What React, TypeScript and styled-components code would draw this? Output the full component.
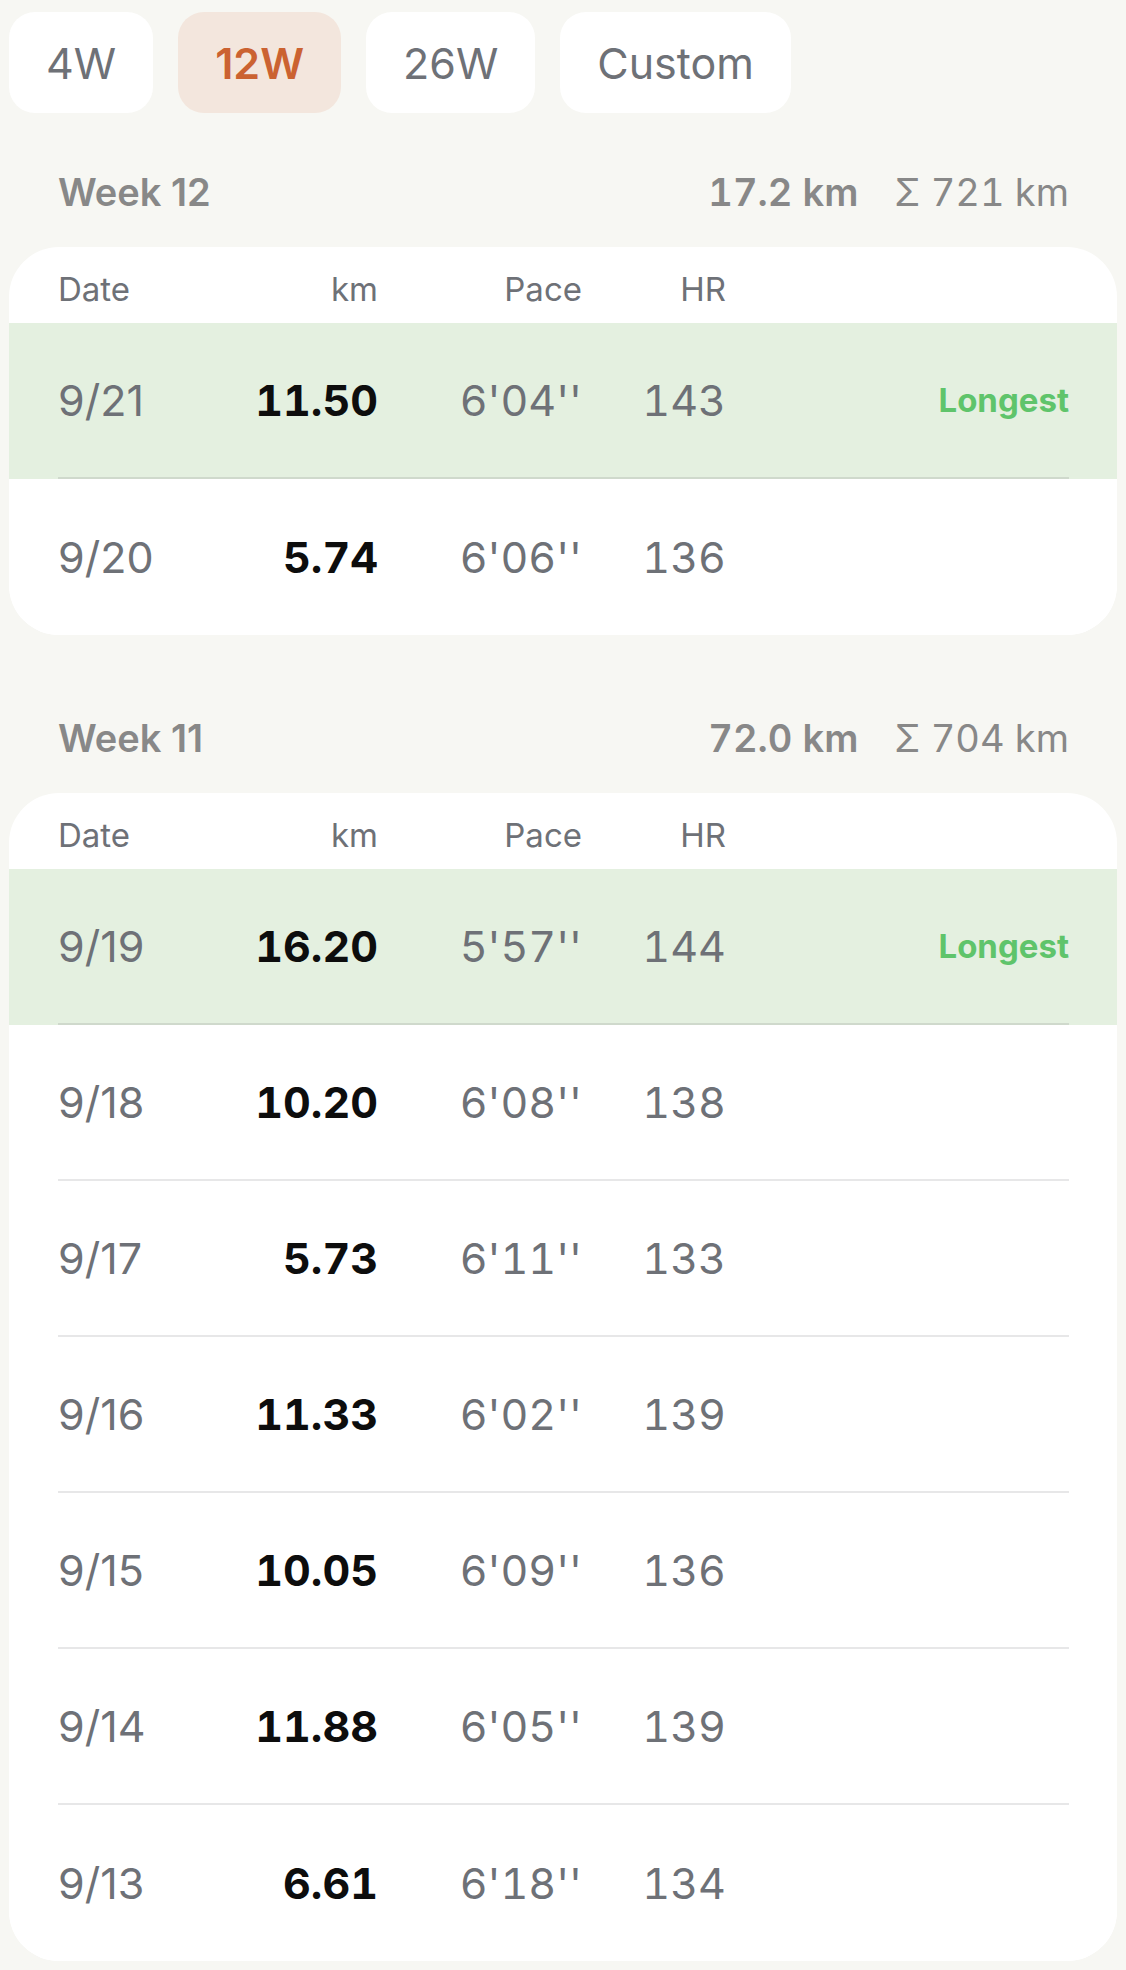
import React from "react";
import styled, { createGlobalStyle } from "styled-components";

const GlobalStyle = createGlobalStyle`
  html, body {
    margin: 0;
    padding: 0;
    background: #f7f7f3;
  }
  body {
    font-family: Inter, "Liberation Sans", Arial, sans-serif;
    font-variant-numeric: tabular-nums;
    -webkit-font-smoothing: antialiased;
  }
`;

interface Run {
  date: string;
  km: string;
  pace: string;
  hr: number;
  longest?: boolean;
}

interface Week {
  label: string;
  total: string;
  cumulative: string;
  runs: Run[];
}

const RANGES = ["4W", "12W", "26W", "Custom"];

const WEEKS: Week[] = [
  {
    label: "Week 12",
    total: "17.2 km",
    cumulative: "Σ 721 km",
    runs: [
      { date: "9/21", km: "11.50", pace: "6'04''", hr: 143, longest: true },
      { date: "9/20", km: "5.74", pace: "6'06''", hr: 136 },
    ],
  },
  {
    label: "Week 11",
    total: "72.0 km",
    cumulative: "Σ 704 km",
    runs: [
      { date: "9/19", km: "16.20", pace: "5'57''", hr: 144, longest: true },
      { date: "9/18", km: "10.20", pace: "6'08''", hr: 138 },
      { date: "9/17", km: "5.73", pace: "6'11''", hr: 133 },
      { date: "9/16", km: "11.33", pace: "6'02''", hr: 139 },
      { date: "9/15", km: "10.05", pace: "6'09''", hr: 136 },
      { date: "9/14", km: "11.88", pace: "6'05''", hr: 139 },
      { date: "9/13", km: "6.61", pace: "6'18''", hr: 134 },
    ],
  },
];

const Page = styled.div`
  padding: 12px 9px 10px;
  display: flex;
  flex-direction: column;
`;

const RangeBar = styled.div`
  display: flex;
  gap: 25px;
`;

const RangeButton = styled.button<{ $active?: boolean }>`
  height: 101px;
  padding: 0 37px;
  border: none;
  border-radius: 26px;
  font-family: inherit;
  font-size: 43px;
  font-weight: ${(p) => (p.$active ? 600 : 400)};
  color: ${(p) => (p.$active ? "#cb6231" : "#6e7177")};
  background: ${(p) => (p.$active ? "#f3e6dd" : "#ffffff")};
`;

const Section = styled.section`
  display: flex;
  flex-direction: column;
  margin-top: 79px;

  &:first-of-type {
    margin-top: 55px;
  }
`;

const SectionHeader = styled.div`
  height: 48px;
  margin-bottom: 31px;
  padding: 0 48px 0 49px;
  display: flex;
  align-items: center;
  justify-content: space-between;
  font-size: 38px;
  color: #888888;
`;

const WeekLabel = styled.span`
  font-weight: 600;
  font-variant-numeric: proportional-nums;
`;

const Totals = styled.div`
  display: flex;
  gap: 36px;
`;

const Total = styled.span<{ $strong?: boolean }>`
  font-weight: ${(p) => (p.$strong ? 600 : 400)};
`;

const Card = styled.div`
  background: #ffffff;
  border-radius: 50px;
  overflow: hidden;
`;

const Columns = styled.div`
  display: grid;
  grid-template-columns: 170px 150px 204px 144px 1fr;
  align-items: center;
`;

const HeaderRow = styled(Columns)`
  height: 76px;
  padding: 8px 48px 0 49px;
  box-sizing: border-box;
  font-size: 33px;
  color: #6e7177;
`;

const Row = styled.div<{ $highlight?: boolean }>`
  padding: 0 48px 0 49px;
  background: ${(p) => (p.$highlight ? "#e4f0e0" : "#ffffff")};

  &:last-child > div {
    border-bottom: none;
  }
`;

const RowGrid = styled(Columns)`
  height: 156px;
  box-sizing: border-box;
  border-bottom: 2px solid rgba(60, 60, 67, 0.12);
  font-size: 43px;
  color: #6e7177;
`;

const Cell = styled.span<{ $align?: "left" | "right" }>`
  text-align: ${(p) => p.$align ?? "right"};
`;

const DateCell = styled(Cell)`
  font-variant-numeric: proportional-nums;
`;

const Km = styled(Cell)`
  font-weight: 700;
  color: #0d0d0d;
`;

const Badge = styled.span`
  justify-self: end;
  font-size: 33px;
  font-weight: 700;
  color: #5fc46b;
`;

const WeekSection = ({ week }: { week: Week }) => (
  <Section>
    <SectionHeader>
      <WeekLabel>{week.label}</WeekLabel>
      <Totals>
        <Total $strong>{week.total}</Total>
        <Total>{week.cumulative}</Total>
      </Totals>
    </SectionHeader>
    <Card>
      <HeaderRow>
        <Cell $align="left">Date</Cell>
        <Cell>km</Cell>
        <Cell>Pace</Cell>
        <Cell>HR</Cell>
        <span />
      </HeaderRow>
      {week.runs.map((run) => (
        <Row key={run.date} $highlight={run.longest}>
          <RowGrid>
            <DateCell $align="left">{run.date}</DateCell>
            <Km>{run.km}</Km>
            <Cell>{run.pace}</Cell>
            <Cell>{run.hr}</Cell>
            {run.longest ? <Badge>Longest</Badge> : <span />}
          </RowGrid>
        </Row>
      ))}
    </Card>
  </Section>
);

export default function App() {
  return (
    <>
      <GlobalStyle />
      <Page>
        <RangeBar>
          {RANGES.map((r) => (
            <RangeButton key={r} $active={r === "12W"}>
              {r}
            </RangeButton>
          ))}
        </RangeBar>
        {WEEKS.map((w) => (
          <WeekSection key={w.label} week={w} />
        ))}
      </Page>
    </>
  );
}
